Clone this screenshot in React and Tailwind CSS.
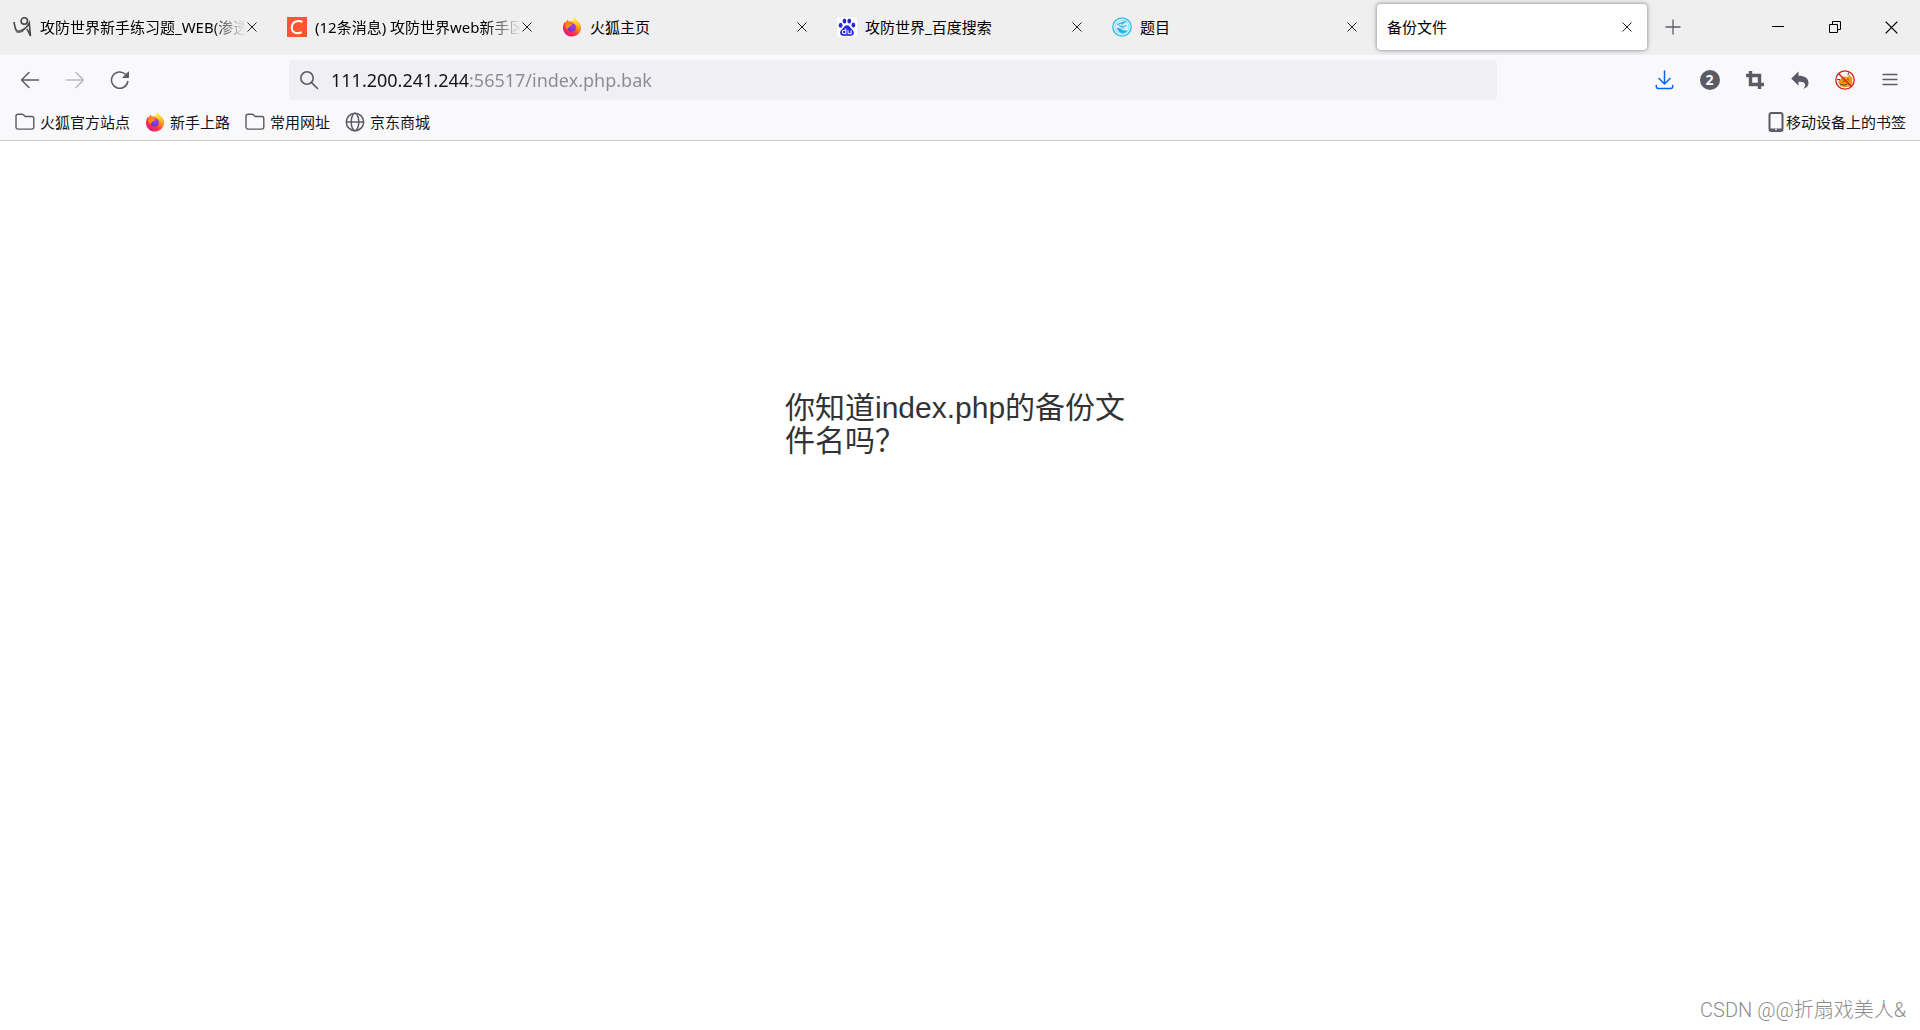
import React, { useState } from "react";

function FirefoxIcon() {
  return (
    <svg viewBox="0 0 20 20" className="size-5 shrink-0" aria-hidden="true">
      <defs>
        <linearGradient id="ffBody" x1="0.85" y1="0.1" x2="0.2" y2="0.95">
          <stop offset="0" stopColor="#fff44f" />
          <stop offset="0.35" stopColor="#ff980e" />
          <stop offset="0.65" stopColor="#ff3647" />
          <stop offset="1" stopColor="#e31587" />
        </linearGradient>
        <linearGradient id="ffFlame" x1="0.5" y1="0" x2="0.6" y2="1">
          <stop offset="0" stopColor="#fff44f" />
          <stop offset="0.5" stopColor="#ffbd2e" />
          <stop offset="1" stopColor="#ff6a2a" />
        </linearGradient>
        <radialGradient id="ffGlobe" cx="0.6" cy="0.3" r="0.8">
          <stop offset="0" stopColor="#b833e1" />
          <stop offset="0.5" stopColor="#7542e5" />
          <stop offset="1" stopColor="#5b2fb8" />
        </radialGradient>
      </defs>
      <path fill="url(#ffBody)" d="M1 11c0-3 .9-5 2-6.500 .1.7.3 1.100.6 1.500C4 4.300 5 3 6 2.400c0 1 .4 1.700 1 2.200 1.300-.7 3-.7 4.300.1C11 3 11.800 1.200 13.200.3c.2 2 1.500 3 2.800 4.100 2 1.700 3 3.900 3 6.200 0 5-4 9-9 9s-9-3.800-9-8.600z" />
      <path fill="url(#ffFlame)" d="M11.300 4.700C11 3 11.800 1.200 13.200.3c.2 2 1.500 3 2.800 4.100 2 1.700 3 3.900 3 6.200 0 2-.7 4-2 5.500.8-3 .3-5.300-1.500-7.300-1.200-1.300-3-2.300-4.200-4.100z" />
      <circle cx="9.800" cy="10.600" r="4" fill="url(#ffGlobe)" />
      <path fill="#ff8a16" d="M3.600 6.500C5 5.600 6.800 6 7.800 7c1.100-.1 2 .2 2.400.5-.1 1-1.200 1.300-2.200 1.700-.6.300-.8.800-1 1.400-.9.200-1.300 1-1.100 2C4 11.500 2.600 9 3.600 6.500z" />
    </svg>
  );
}

function FigureIcon() {
  return (
    <svg viewBox="0 0 20 20" className="size-5 shrink-0" fill="none" stroke="#444" aria-hidden="true">
      <circle cx="12.300" cy="4" r="3.200" strokeWidth="1.600" />
      <path d="M2 5c.5 4 1.300 7 2.700 9.300" strokeWidth="1.600" />
      <path d="M4.500 14.300c2.500.7 4.500.2 6.500-1.100" stroke="#666" strokeWidth="2.600" />
      <path d="M10 13.500c3-1.500 5.500-4 7.300-7.500.3 4 .6 8 1.200 13-1.200-3-2.300-5.200-3.700-7" strokeWidth="1.600" />
    </svg>
  );
}

function CsdnIcon() {
  return (
    <svg viewBox="0 0 20 20" className="size-5 shrink-0" aria-hidden="true">
      <rect width="20" height="20" fill="#fc5531" />
      <path d="M15.300 5.200C11.500 2.700 5.300 4.300 4.800 10.200c-.4 5.700 5 7.200 9.900 4.900" fill="none" stroke="#fff" strokeWidth="2" />
    </svg>
  );
}

function BaiduIcon() {
  return (
    <svg viewBox="0 0 20 20" className="size-5 shrink-0" aria-hidden="true">
      <rect width="20" height="20" rx="2" fill="#fff" />
      <g fill="#2529d8">
        <ellipse cx="3.600" cy="8.300" rx="1.900" ry="2.500" />
        <ellipse cx="7.500" cy="4" rx="1.900" ry="2.600" />
        <ellipse cx="12.300" cy="4" rx="1.900" ry="2.600" />
        <ellipse cx="16.400" cy="8" rx="1.900" ry="2.500" />
        <path d="M10 8.300c2 0 2.700 1.800 4.200 3.200 2 1.700 3 3 2.600 5-.5 2.500-3.500 2.500-6.800 2.300-3.300.2-6.300.2-6.800-2.300-.4-2 .6-3.300 2.600-5C7.300 10.100 8 8.300 10 8.300z" />
      </g>
      <g fill="none" stroke="#fff" strokeWidth="1.100">
        <path d="M8.800 11.500v5.300H7.200c-2.400 0-2.400-3.500 0-3.500h1.600" />
        <path d="M11 13.200v2.500c0 1.100.7 1.100 1.300 1.100h1.800v-3.600" />
      </g>
    </svg>
  );
}

function ArenaIcon() {
  return (
    <svg viewBox="0 0 20 20" className="size-5 shrink-0" fill="none" stroke="#2fbfe8" aria-hidden="true">
      <circle cx="10" cy="10" r="10" fill="#d9f2fa" stroke="none" />
      <circle cx="10" cy="10" r="9.200" strokeWidth="1.300" />
      <circle cx="10" cy="10" r="7" strokeWidth="0.700" opacity="0.600" />
      <path d="M5 7.500c3-.5 4.500-2.500 8.500-3-1.500 1.500-3 2.200-4.500 2.700M8 9c2 .5 4 .3 6.500-.3M7 8.500l5 3" strokeWidth="1.200" />
      <path d="M5 11c2 0 4 .7 5.500 2.200l4.500.8c-2 2-3.500 2.200-5.300 1.900-2-.3-3.700-1.900-4.700-4.900z" fill="#17b4e4" strokeWidth="0.500" />
    </svg>
  );
}

function Cross({ className }) {
  return (
    <svg viewBox="0 0 10 10" className={className} fill="none" stroke="currentColor" aria-hidden="true">
      <path d="M0.500 0.500l9 9M9.500 0.500l-9 9" strokeWidth="1" />
    </svg>
  );
}

function FolderIcon() {
  return (
    <svg viewBox="0 0 20 20" className="size-5 shrink-0" fill="none" stroke="#5b5b66" strokeWidth="1.400" aria-hidden="true">
      <path d="M1 4.200c0-1.200.8-2 2-2h4c.6 0 1 .2 1.400.6l1.800 1.700h6.600c1.200 0 2 .8 2 2v8.600c0 1.200-.8 2-2 2H3c-1.200 0-2-.8-2-2z" />
    </svg>
  );
}

function GlobeIcon() {
  return (
    <svg viewBox="0 0 20 20" className="size-5 shrink-0" fill="none" stroke="#5b5b66" strokeWidth="1.500" aria-hidden="true">
      <circle cx="10" cy="10" r="8.700" />
      <ellipse cx="10" cy="10" rx="3.800" ry="8.700" />
      <path d="M1.300 10h17.400" />
    </svg>
  );
}

const tabs = [
  { title: "攻防世界新手练习题_WEB(渗透", icon: <FigureIcon />, fade: true },
  { title: "(12条消息) 攻防世界web新手区", icon: <CsdnIcon />, fade: true },
  { title: "火狐主页", icon: <FirefoxIcon /> },
  { title: "攻防世界_百度搜索", icon: <BaiduIcon /> },
  { title: "题目", icon: <ArenaIcon /> },
  { title: "备份文件", active: true },
];

function Tab({ title, icon, fade, active }) {
  return (
    <div
      className={
        "flex h-[46px] min-w-0 max-w-[270px] flex-1 items-center rounded pl-2.5 pr-2.5 " +
        (active ? "bg-white shadow-[0_0_4px_rgba(80,80,100,0.75)]" : "")
      }
    >
      <button
        type="button"
        role="tab"
        aria-selected={Boolean(active)}
        className={
          "flex min-w-0 flex-1 items-center gap-2 overflow-hidden whitespace-nowrap text-left " +
          (fade ? "[mask-image:linear-gradient(to_right,black_calc(100%-36px),transparent)]" : "")
        }
      >
        {icon}
        <span>{title}</span>
      </button>
      <button type="button" aria-label="关闭标签页" className="-ml-1 flex size-5 shrink-0 items-center justify-center text-[#222]">
        <Cross className="size-2.5" />
      </button>
    </div>
  );
}

function ToolButton({ label, children, className = "" }) {
  return (
    <button type="button" aria-label={label} className={"flex h-10 w-[45px] shrink-0 items-center justify-center text-[#5b5b66] " + className}>
      {children}
    </button>
  );
}

function TabBar() {
  return (
    <div className="flex h-[55px] items-center bg-[#efefef] pb-px pl-0.5">
      <div role="tablist" className="flex min-w-0 max-w-[1645px] flex-1 gap-[5px]">
        {tabs.map((t) => (
          <Tab key={t.title} {...t} />
        ))}
      </div>
      <button type="button" aria-label="新建标签页" className="ml-1.5 flex size-10 items-center justify-center text-[#5b5b66]">
        <svg viewBox="0 0 16 16" className="size-4" stroke="currentColor" strokeWidth="1.300" aria-hidden="true">
          <path d="M8 .5v15M.5 8h15" />
        </svg>
      </button>
      <div className="ml-auto flex text-black">
        <button type="button" aria-label="最小化" className="flex h-10 w-[57px] items-center justify-center">
          <svg viewBox="0 0 12 12" className="size-3" aria-hidden="true">
            <path d="M0 5.500h12" stroke="currentColor" />
          </svg>
        </button>
        <button type="button" aria-label="还原" className="flex h-10 w-[57px] items-center justify-center">
          <svg viewBox="0 0 12 12" className="size-3" fill="none" stroke="currentColor" aria-hidden="true">
            <path d="M.5 3.500h8v8h-8zM3.500 3.500v-3h8v8h-3" />
          </svg>
        </button>
        <button type="button" aria-label="关闭" className="flex h-10 w-[57px] items-center justify-center">
          <Cross className="size-[13px]" />
        </button>
      </div>
    </div>
  );
}

function NavBar() {
  const [url, setUrl] = useState("111.200.241.244:56517/index.php.bak");
  return (
    <div className="flex h-[50px] items-center pl-[7px] pr-2">
      <ToolButton label="后退">
        <svg viewBox="0 0 20 20" className="size-5" fill="none" stroke="currentColor" strokeWidth="1.500" strokeLinecap="round" strokeLinejoin="round" aria-hidden="true">
          <path d="M18.500 10H1.500M9 2.500 1.500 10 9 17.500" />
        </svg>
      </ToolButton>
      <ToolButton label="前进" className="opacity-40">
        <svg viewBox="0 0 20 20" className="size-5" fill="none" stroke="currentColor" strokeWidth="1.500" strokeLinecap="round" strokeLinejoin="round" aria-hidden="true">
          <path d="M1.500 10h17M11 2.500l7.500 7.500-7.500 7.500" />
        </svg>
      </ToolButton>
      <ToolButton label="重新载入">
        <svg viewBox="0 0 20 20" className="size-5" fill="none" stroke="currentColor" strokeWidth="1.500" strokeLinecap="round" aria-hidden="true">
          <path d="M17.800 11.500A8.200 8.200 0 1 1 15.500 4.300L17 5.800" />
          <path d="M18.500 2.200v5.300h-5.300z" fill="currentColor" strokeWidth="1" strokeLinejoin="round" />
        </svg>
      </ToolButton>
      <label className="ml-[147px] flex h-10 min-w-0 flex-1 items-center gap-3 rounded bg-[#f0eff4] pl-2.5 pr-3">
        <svg viewBox="0 0 20 20" className="size-5 shrink-0" fill="none" stroke="#5b5b66" strokeWidth="1.600" strokeLinecap="round" aria-hidden="true">
          <circle cx="8" cy="8" r="6.200" />
          <path d="M12.600 12.600 18.500 18.500" />
        </svg>
        <input
          type="text"
          aria-label="地址"
          value={url}
          onChange={(e) => setUrl(e.target.value)}
          className="h-10 min-w-0 flex-1 bg-[linear-gradient(to_right,#15141a_138px,#8a8a92_138px)] bg-clip-text text-lg text-transparent outline-none"
        />
      </label>
      <div className="ml-[145px] flex">
        <ToolButton label="下载">
          <svg viewBox="0 0 20 20" className="size-5" fill="none" stroke="#0a66e8" strokeWidth="1.500" strokeLinecap="round" strokeLinejoin="round" aria-hidden="true">
            <path d="M9.500 1v13M4 8.500 9.500 14l5.500-5.500M1.300 15.500v1c0 1.200.8 2 2 2h12.400c1.200 0 2-.8 2-2v-1" />
          </svg>
        </ToolButton>
        <ToolButton label="扩展">
          <span className="flex size-5 items-center justify-center rounded-full bg-[#5b5b66] text-sm font-bold leading-5 text-white">2</span>
        </ToolButton>
        <ToolButton label="截图">
          <svg viewBox="0 0 20 20" className="size-5" fill="none" stroke="currentColor" strokeWidth="3.400" aria-hidden="true">
            <path d="M5.500 1v13.500H19M1 5.500h13.500V19" />
          </svg>
        </ToolButton>
        <ToolButton label="撤销">
          <svg viewBox="0 0 20 20" className="size-5" fill="currentColor" aria-hidden="true">
            <path d="M8.500 1.500v4.300c6 0 10 2.500 10 7.200 0 3-1.800 5-5.500 5.800 1.500-1.200 2.200-2.400 2.200-3.800 0-2.200-2.200-3.300-6.700-3.300v4L1.200 8.500z" />
          </svg>
        </ToolButton>
        <ToolButton label="脚本管理">
          <svg viewBox="0 0 20 20" className="size-5" aria-hidden="true">
            <path d="M3.500 10.500 6 8.500 8 6.500l5 .5 2-2.500.8 3L18 7.500l-1 3 .5 3-3 3-5 .8-4-1-2-3z" fill="#ef9413" />
            <path d="M5 14l4 1.200 3-1M12 9.500l2 .5M8 11.500l2-.8M13.500 2.500l-.5 3M2 9.500h3" stroke="#5f5130" strokeWidth="1" fill="none" />
            <circle cx="10" cy="10" r="9.200" fill="none" stroke="#d81c24" strokeWidth="1.300" />
            <path d="M3.500 3.500l13 13" stroke="#d81c24" strokeWidth="1.500" />
          </svg>
        </ToolButton>
        <ToolButton label="菜单">
          <svg viewBox="0 0 16 16" className="size-4" stroke="currentColor" strokeWidth="1.300" strokeLinecap="round" aria-hidden="true">
            <path d="M1 2.500h14M1 7.500h14M1 12.500h14" />
          </svg>
        </ToolButton>
      </div>
    </div>
  );
}

const bookmarks = [
  { title: "火狐官方站点", icon: <FolderIcon /> },
  { title: "新手上路", icon: <FirefoxIcon /> },
  { title: "常用网址", icon: <FolderIcon /> },
  { title: "京东商城", icon: <GlobeIcon /> },
];

function BookmarksBar() {
  return (
    <div className="flex h-9 items-center border-b border-[#cccccf] pb-px pl-[15px] pr-3.5 text-[#15141a]">
      <div className="flex gap-[15px]">
        {bookmarks.map((b) => (
          <a key={b.title} href="#" className="flex items-center gap-[5px]">
            {b.icon}
            <span>{b.title}</span>
          </a>
        ))}
      </div>
      <a href="#" className="ml-auto flex items-center gap-0.5">
        <svg viewBox="0 0 16 20" className="h-5 w-4 shrink-0" aria-hidden="true">
          <rect x="1.500" y="1" width="13" height="18" rx="2" fill="none" stroke="#5b5b66" strokeWidth="2" />
          <path d="M2 17.500h12" stroke="#5b5b66" strokeWidth="2" />
          <path d="M7 17.700h2" stroke="#fff" strokeWidth="1" />
        </svg>
        <span>移动设备上的书签</span>
      </a>
    </div>
  );
}

export default function App() {
  return (
    <div className="flex min-h-screen flex-col bg-white font-['Noto_Sans','Noto_Sans_CJK_SC',sans-serif] text-[15px] leading-5 text-black">
      <header className="bg-[#f9f9fb]">
        <TabBar />
        <NavBar />
        <BookmarksBar />
      </header>
      <main className="flex-1 px-4 pt-[250px]">
        <h3 className="mx-auto max-w-[350px] font-['Liberation_Sans','Noto_Sans_CJK_SC',sans-serif] text-3xl leading-[33px] text-[#333]">
          你知道index.php的备份文件名吗？
        </h3>
      </main>
      <footer className="flex justify-end px-3.5 pb-1.5 font-['Roboto','Noto_Sans_CJK_SC',sans-serif] text-xl font-light leading-7 text-[#8c8c8c]">
        CSDN @@折扇戏美人&amp;
      </footer>
    </div>
  );
}
